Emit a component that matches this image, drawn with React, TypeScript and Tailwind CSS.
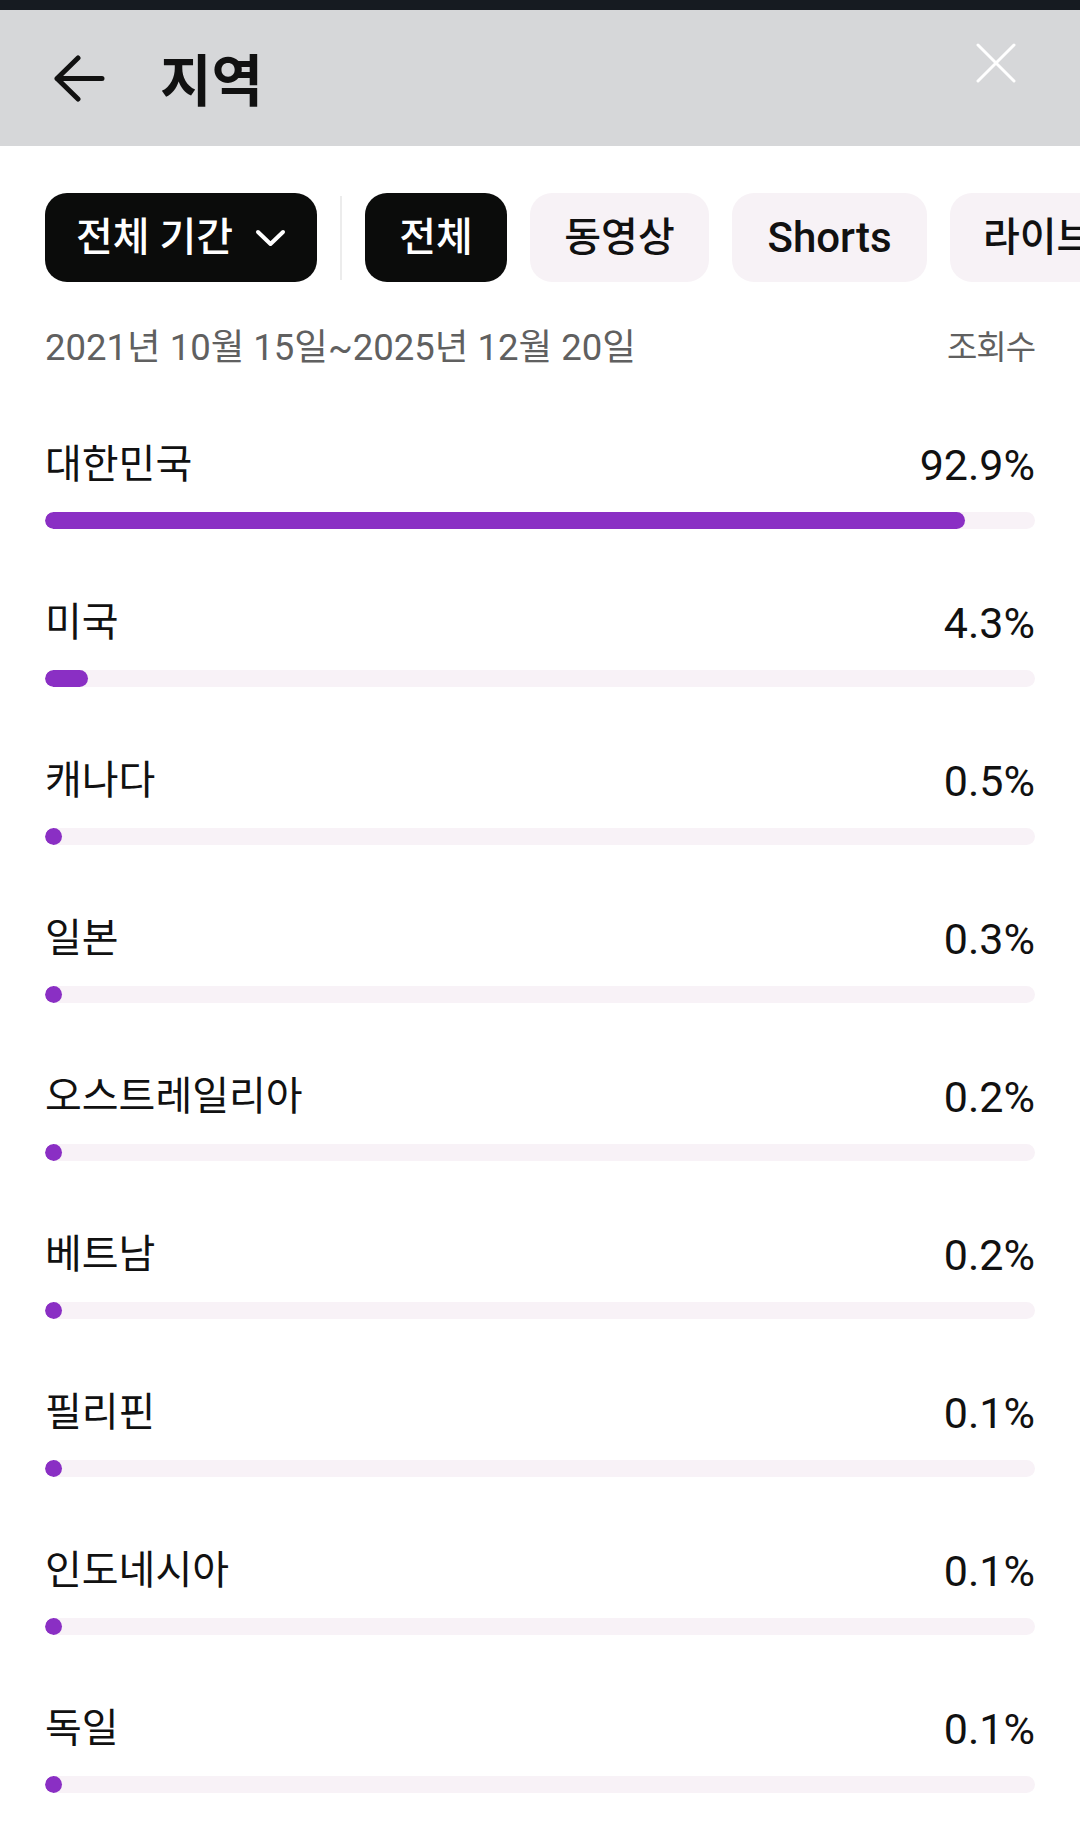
import React from "react";

const rows: { name: string; pct: number }[] = [
  { name: "대한민국", pct: 92.9 },
  { name: "미국", pct: 4.3 },
  { name: "캐나다", pct: 0.5 },
  { name: "일본", pct: 0.3 },
  { name: "오스트레일리아", pct: 0.2 },
  { name: "베트남", pct: 0.2 },
  { name: "필리핀", pct: 0.1 },
  { name: "인도네시아", pct: 0.1 },
  { name: "독일", pct: 0.1 },
];

export default function App() {
  return (
    <div className="w-[1080px] min-h-[1830px] bg-white overflow-hidden font-['Roboto','Noto_Sans_CJK_KR',sans-serif]">
      <div className="h-[10px] bg-[#161b21]" />
      <div className="h-[136px] bg-[#d6d7d9] flex items-center">
        <svg className="ml-[53px]" width="52" height="47" viewBox="0 0 52 47" fill="none">
          <path d="M49 23.5H4M25 3L4 23.5L25 44" stroke="#111111" strokeWidth="5" strokeLinecap="round" strokeLinejoin="round" />
        </svg>
        <div className="ml-[55px] mt-[8px] text-[56px] font-bold text-[#111111] leading-none">지역</div>
        <div className="flex-1" />
        <svg className="self-start mt-[33px] mr-[64px]" width="40" height="40" viewBox="0 0 40 40" fill="none">
          <path d="M2 2L38 38M38 2L2 38" stroke="#ffffff" strokeWidth="3" strokeLinecap="round" />
        </svg>
      </div>

      <div className="mt-[47px] pl-[45px] flex items-center gap-[23px] whitespace-nowrap">
        <div className="shrink-0 w-[272px] h-[89px] rounded-[22px] bg-[#0b0c0b] text-white flex items-center justify-center gap-[22px] text-[40px] font-medium">
          <span>전체 기간</span>
          <svg width="31" height="18" viewBox="0 0 31 18" fill="none">
            <path d="M3 3L15.5 15L28 3" stroke="#ffffff" strokeWidth="4" strokeLinecap="round" strokeLinejoin="round" />
          </svg>
        </div>
        <div className="shrink-0 w-[2px] h-[84px] bg-[#ececec]" />
        <div className="shrink-0 w-[142px] h-[89px] rounded-[22px] bg-[#0b0c0b] text-white flex items-center justify-center text-[40px] font-medium">
          전체
        </div>
        <div className="shrink-0 w-[179px] h-[89px] rounded-[22px] bg-[#f7f2f6] text-[#111111] flex items-center justify-center text-[40px] font-medium">
          동영상
        </div>
        <div className="shrink-0 w-[195px] h-[89px] rounded-[22px] bg-[#f7f2f6] text-[#111111] flex items-center justify-center text-[42px] font-medium">
          Shorts
        </div>
        <div className="shrink-0 w-[190px] h-[89px] rounded-[22px] bg-[#f7f2f6] text-[#111111] flex items-center pl-[33px] text-[40px] font-medium">
          라이브
        </div>
      </div>

      <div className="mt-[41px] px-[45px] h-[50px] flex items-center justify-between">
        <span className="text-[36.5px] text-[#606060]">2021년 10월 15일~2025년 12월 20일</span>
        <span className="text-[33px] text-[#606060] tracking-[-1px]">조회수</span>
      </div>

      <div className="mt-[67px] px-[45px] flex flex-col">
        {rows.map((r) => (
          <div key={r.name} className="h-[158px] flex flex-col">
            <div className="h-[50px] flex items-center justify-between">
              <span className="text-[40px] text-[#111111]">{r.name}</span>
              <span className="text-[43px] text-[#111111]">{r.pct}%</span>
            </div>
            <div className="mt-[22px] h-[17px] w-full rounded-full bg-[#f8f2f7] overflow-hidden">
              <div
                className="h-full rounded-full bg-[#8a2fc4]"
                style={{ width: `max(17px, ${r.pct}%)` }}
              />
            </div>
          </div>
        ))}
      </div>
    </div>
  );
}
